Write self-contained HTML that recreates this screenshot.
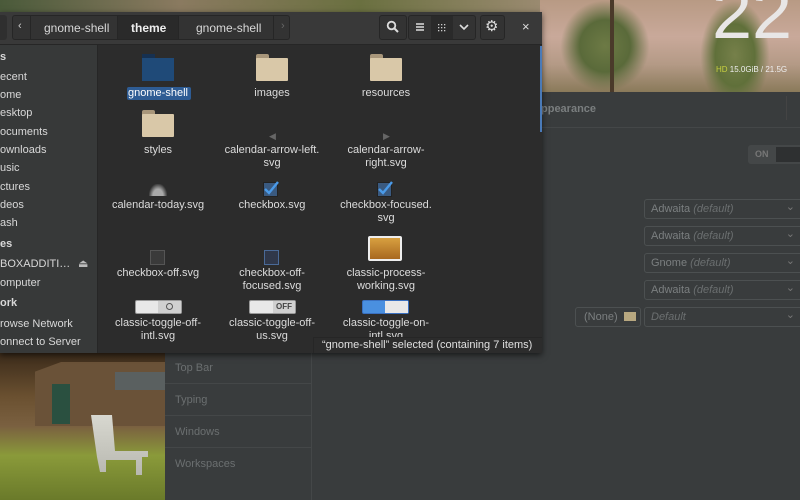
<!DOCTYPE html>
<html><head><meta charset="utf-8"><style>
*{margin:0;padding:0;box-sizing:border-box}
body{width:800px;height:500px;overflow:hidden;position:relative;background:#393c3d;font-family:"Liberation Sans","DejaVu Sans",sans-serif;}
.a{position:absolute}
.t{position:absolute;color:#d8d8d8;font-size:11px;white-space:nowrap}
.c{position:absolute;color:#dcdcdc;font-size:11px;text-align:center;width:110px;line-height:12.5px}
.fold{position:absolute;width:32px;height:27px}
.fold:before{content:"";position:absolute;left:0;top:0;width:13px;height:5px;background:#a8967a;border-radius:2px 2px 0 0}
.fold:after{content:"";position:absolute;left:0;top:4px;width:32px;height:23px;background:#d9c8a8;border-radius:1px}
.tw{position:absolute;color:#6b6f70;font-size:11px}
.dd{position:absolute;left:644px;width:160px;height:20px;border:1px solid #4c5051;border-radius:3px;color:#7b7f80;font-size:11px;padding:3px 6px}
.dd i{color:#6b6f70}
.dd:after{content:"⌄";position:absolute;right:8px;top:0px;color:#777}
</style></head><body>
<div class="a" style="left:0;top:0;width:800px;height:92px;background:linear-gradient(180deg,#b89a84 0%,#c9a99a 40%,#b49a86 70%,#8a7a5a 100%)"></div>
<div class="a" style="left:560px;top:0;width:90px;height:92px;background:radial-gradient(ellipse at 50% 50%,#6d7a45 0%,#5a6a3a 40%,rgba(0,0,0,0) 70%)"></div>
<div class="a" style="left:610px;top:0;width:4px;height:92px;background:#4a3a2a"></div>
<div class="a" style="left:700px;top:0;width:70px;height:92px;background:radial-gradient(ellipse at 50% 60%,#76804a 0%,#60703a 40%,rgba(0,0,0,0) 70%)"></div>
<div class="a" style="left:0;top:0;width:540px;height:12px;background:linear-gradient(90deg,#4a5a3a,#8a7a60,#6a7040,#9a8a70)"></div>
<div class="a" style="left:712px;top:-22px;color:#e8e6e6;font-size:72px;line-height:72px">22</div>
<div class="a" style="left:716px;top:65px;font-size:8px;color:#eee"><span style="color:#c8d040">HD</span> 15.0GiB / 21.5G</div>
<div class="a" style="left:540px;top:92px;width:260px;height:36px;background:#393c3d;border-bottom:1px solid #444748"></div>
<div class="a" style="left:541px;top:103px;color:#7a7e7f;font-size:11px;font-weight:bold">ppearance</div>
<div class="a" style="left:786px;top:96px;width:1px;height:24px;background:#444"></div>
<div class="a" style="left:748px;top:145px;width:60px;height:19px;background:#444748;border-radius:3px"></div>
<div class="a" style="left:776px;top:147px;width:30px;height:15px;background:#2e3031"></div>
<div class="a" style="left:755px;top:149px;color:#777;font-size:9px;font-weight:bold">ON</div>
<div class="dd" style="top:199px">Adwaita <i>(default)</i></div>
<div class="dd" style="top:226px">Adwaita <i>(default)</i></div>
<div class="dd" style="top:253px">Gnome <i>(default)</i></div>
<div class="dd" style="top:280px">Adwaita <i>(default)</i></div>
<div class="dd" style="top:307px"><i>Default</i></div>
<div class="a" style="left:575px;top:307px;width:66px;height:20px;border:1px solid #4c5051;border-radius:3px;color:#7b7f80;font-size:11px;padding:3px 8px">(None)</div>
<div class="a" style="left:624px;top:312px;width:12px;height:9px;background:#b8a880"></div>
<div class="a" style="left:165px;top:352px;width:147px;height:148px;background:#393c3d;border-right:1px solid #444748"></div>
<div class="a" style="left:165px;top:383px;width:146px;height:1px;background:#444748"></div>
<div class="a" style="left:165px;top:415px;width:146px;height:1px;background:#444748"></div>
<div class="a" style="left:165px;top:447px;width:146px;height:1px;background:#444748"></div>
<div class="tw" style="left:175px;top:362px">Top Bar</div>
<div class="tw" style="left:175px;top:394px">Typing</div>
<div class="tw" style="left:175px;top:426px">Windows</div>
<div class="tw" style="left:175px;top:458px">Workspaces</div>
<div class="a" style="left:0;top:352px;width:165px;height:148px;background:linear-gradient(180deg,#3a2a1a 0%,#6a5030 30%,#7a6040 50%,#8a9a3a 70%,#6a7a2a 100%)"></div>
<div class="a" style="left:35px;top:362px;width:130px;height:64px;background:#6a5238;clip-path:polygon(0 15%,20% 0,100% 0,100% 100%,0 100%)"></div>
<div class="a" style="left:115px;top:372px;width:50px;height:18px;background:#5a6060"></div>
<div class="a" style="left:52px;top:384px;width:18px;height:40px;background:#2a5040"></div>
<div class="a" style="left:88px;top:415px;width:60px;height:60px;background:linear-gradient(#d8d8d0,#b8b8b0);clip-path:polygon(5% 0,40% 0,45% 60%,100% 60%,100% 70%,90% 70%,90% 100%,80% 100%,80% 75%,30% 75%,30% 95%,20% 95%,15% 70%)"></div>
<div class="a" style="left:0;top:12px;width:542px;height:341px;background:#2c2c2c;box-shadow:0 2px 6px rgba(0,0,0,.6)"></div>
<div class="a" style="left:0;top:12px;width:542px;height:33px;background:#393939;border-bottom:1px solid #262626"></div>
<div class="a" style="left:0;top:45px;width:98px;height:308px;background:#373939;border-right:1px solid #262626"></div>
<div class="a" style="left:0;top:15px;width:7px;height:25px;background:#2f2f2f;border-radius:0 3px 3px 0"></div>
<div class="a" style="left:12px;top:15px;width:278px;height:25px;background:#333;border:1px solid #262626;border-radius:3px"></div>
<div class="a" style="left:30px;top:16px;width:1px;height:23px;background:#262626"></div>
<div class="a" style="left:117px;top:16px;width:62px;height:23px;background:#2a2a2a;border-left:1px solid #262626;border-right:1px solid #262626"></div>
<div class="a" style="left:273px;top:16px;width:1px;height:23px;background:#262626"></div>
<div class="t" style="left:18px;top:20px;color:#ccc">‹</div>
<div class="t" style="left:281px;top:20px;color:#666">›</div>
<div class="t" style="left:44px;top:21px;font-size:12px">gnome-shell</div>
<div class="t" style="left:131px;top:21px;font-size:12px;font-weight:bold;color:#eee">theme</div>
<div class="t" style="left:196px;top:21px;font-size:12px">gnome-shell</div>
<div class="a" style="left:379px;top:15px;width:28px;height:25px;background:#333;border:1px solid #262626;border-radius:3px"></div>
<svg class="a" style="left:386px;top:20px" width="14" height="14"><circle cx="5.5" cy="5.5" r="3.8" fill="none" stroke="#ddd" stroke-width="1.8"/><path d="M8.5 8.5L12 12" stroke="#ddd" stroke-width="2"/></svg>
<div class="a" style="left:408px;top:15px;width:68px;height:25px;background:#333;border:1px solid #262626;border-radius:3px"></div>
<div class="a" style="left:431px;top:16px;width:22px;height:23px;background:#2a2a2a"></div>
<svg class="a" style="left:413px;top:20px" width="60" height="14"><path d="M3 4h8M3 7h8M3 10h8" stroke="#ddd" stroke-width="1.4"/><g fill="#ccc"><rect x="25" y="4" width="1.3" height="1.3"/><rect x="28" y="4" width="1.3" height="1.3"/><rect x="31" y="4" width="1.3" height="1.3"/><rect x="25" y="7" width="1.3" height="1.3"/><rect x="28" y="7" width="1.3" height="1.3"/><rect x="31" y="7" width="1.3" height="1.3"/><rect x="25" y="10" width="1.3" height="1.3"/><rect x="28" y="10" width="1.3" height="1.3"/><rect x="31" y="10" width="1.3" height="1.3"/></g><path d="M47 5l4 4 4-4" fill="none" stroke="#ddd" stroke-width="1.6"/></svg>
<div class="a" style="left:480px;top:15px;width:25px;height:25px;background:#333;border:1px solid #262626;border-radius:3px"></div>
<div class="a" style="left:485px;top:17px;color:#ddd;font-size:15px">⚙</div>
<div class="a" style="left:522px;top:19px;color:#ddd;font-size:13px">×</div>
<div class="t" style="left:0;top:51px;font-weight:bold">s</div>
<div class="t" style="left:0;top:71px">ecent</div>
<div class="t" style="left:0;top:89px">ome</div>
<div class="t" style="left:0;top:107px">esktop</div>
<div class="t" style="left:0;top:126px">ocuments</div>
<div class="t" style="left:0;top:144px">ownloads</div>
<div class="t" style="left:0;top:162px">usic</div>
<div class="t" style="left:0;top:181px">ctures</div>
<div class="t" style="left:0;top:199px">deos</div>
<div class="t" style="left:0;top:217px">ash</div>
<div class="t" style="left:0;top:238px;font-weight:bold">es</div>
<div class="t" style="left:0;top:258px">BOXADDITI…</div>
<div class="t" style="left:78px;top:257px;color:#bbb">⏏</div>
<div class="t" style="left:0;top:277px">omputer</div>
<div class="t" style="left:0;top:297px;font-weight:bold">ork</div>
<div class="t" style="left:0;top:318px">rowse Network</div>
<div class="t" style="left:0;top:336px">onnect to Server</div>
<div class="a" style="left:540px;top:46px;width:2px;height:86px;background:#4a7ab8"></div>
<div class="fold" style="left:142px;top:54px"></div>
<div class="a" style="left:142px;top:54px;width:13px;height:5px;background:#163050"></div>
<div class="a" style="left:142px;top:58px;width:32px;height:23px;background:#1f4a78"></div>
<div class="fold" style="left:256px;top:54px"></div>
<div class="fold" style="left:370px;top:54px"></div>
<div class="a" style="left:127px;top:87px;width:64px;height:13px;background:#2e5c94;border-radius:2px"></div>
<div class="c" style="left:103px;top:87px;color:#fff">gnome-shell</div>
<div class="c" style="left:217px;top:87px">images</div>
<div class="c" style="left:331px;top:87px">resources</div>
<div class="fold" style="left:142px;top:110px"></div>
<div class="c" style="left:103px;top:144px">styles</div>
<div class="a" style="left:269px;top:131px;color:#666;font-size:9px">◀</div>
<div class="a" style="left:383px;top:131px;color:#666;font-size:9px">▶</div>
<div class="c" style="left:212px;top:144px;width:120px">calendar-arrow-left.<br>svg</div>
<div class="c" style="left:331px;top:144px">calendar-arrow-<br>right.svg</div>
<div class="a" style="left:149px;top:184px;width:18px;height:12px;background:radial-gradient(ellipse at 50% 100%,#aaa 40%,rgba(0,0,0,0) 75%)"></div>
<div class="c" style="left:103px;top:199px;width:110px">calendar-today.svg</div>
<div class="a" style="left:263px;top:182px;width:15px;height:15px;background:#3a5a80;border:1px solid #222"></div>
<svg class="a" style="left:262px;top:179px" width="20" height="18"><path d="M3 10l4 4 9-11" fill="none" stroke="#4a9ae8" stroke-width="2.4"/></svg>
<div class="c" style="left:217px;top:199px">checkbox.svg</div>
<div class="a" style="left:377px;top:182px;width:15px;height:15px;background:#3a5a80;border:1px solid #222"></div>
<svg class="a" style="left:376px;top:179px" width="20" height="18"><path d="M3 10l4 4 9-11" fill="none" stroke="#4a9ae8" stroke-width="2.4"/></svg>
<div class="c" style="left:331px;top:199px">checkbox-focused.<br>svg</div>
<div class="a" style="left:150px;top:250px;width:15px;height:15px;background:#3a3a3a;border:1px solid #555"></div>
<div class="c" style="left:103px;top:267px">checkbox-off.svg</div>
<div class="a" style="left:264px;top:250px;width:15px;height:15px;background:#30384a;border:1px solid #4a6a98"></div>
<div class="c" style="left:217px;top:267px">checkbox-off-<br>focused.svg</div>
<div class="a" style="left:368px;top:236px;width:34px;height:25px;background:linear-gradient(#d8a040,#a86820);border:2px solid #eee;border-radius:2px"></div>
<div class="c" style="left:331px;top:267px">classic-process-<br>working.svg</div>
<div class="a" style="left:135px;top:300px;width:47px;height:14px;background:#e8e8e8;border:1px solid #999;border-radius:2px"></div>
<div class="a" style="left:158px;top:301px;width:23px;height:12px;background:#d0d0d0"></div>
<div class="a" style="left:166px;top:303px;width:7px;height:7px;border:1.5px solid #555;border-radius:50%"></div>
<div class="c" style="left:103px;top:317px">classic-toggle-off-<br>intl.svg</div>
<div class="a" style="left:249px;top:300px;width:47px;height:14px;background:#e8e8e8;border:1px solid #999;border-radius:2px"></div>
<div class="a" style="left:273px;top:301px;width:22px;height:12px;background:#d0d0d0;color:#444;font-size:8px;font-weight:bold;text-align:center;line-height:12px">OFF</div>
<div class="c" style="left:217px;top:317px">classic-toggle-off-<br>us.svg</div>
<div class="a" style="left:362px;top:300px;width:47px;height:14px;background:#4a90e0;border:1px solid #3a70c0;border-radius:2px"></div>
<div class="a" style="left:385px;top:301px;width:23px;height:12px;background:#e8e8e8"></div>
<div class="c" style="left:331px;top:317px">classic-toggle-on-<br>intl.svg</div>
<div class="a" style="left:313px;top:337px;width:229px;height:16px;background:#2c2c2c;border-top:1px solid #262626;border-left:1px solid #262626"></div>
<div class="t" style="left:322px;top:339px;color:#e0e0e0">“gnome-shell” selected  (containing 7 items)</div>
</body></html>
